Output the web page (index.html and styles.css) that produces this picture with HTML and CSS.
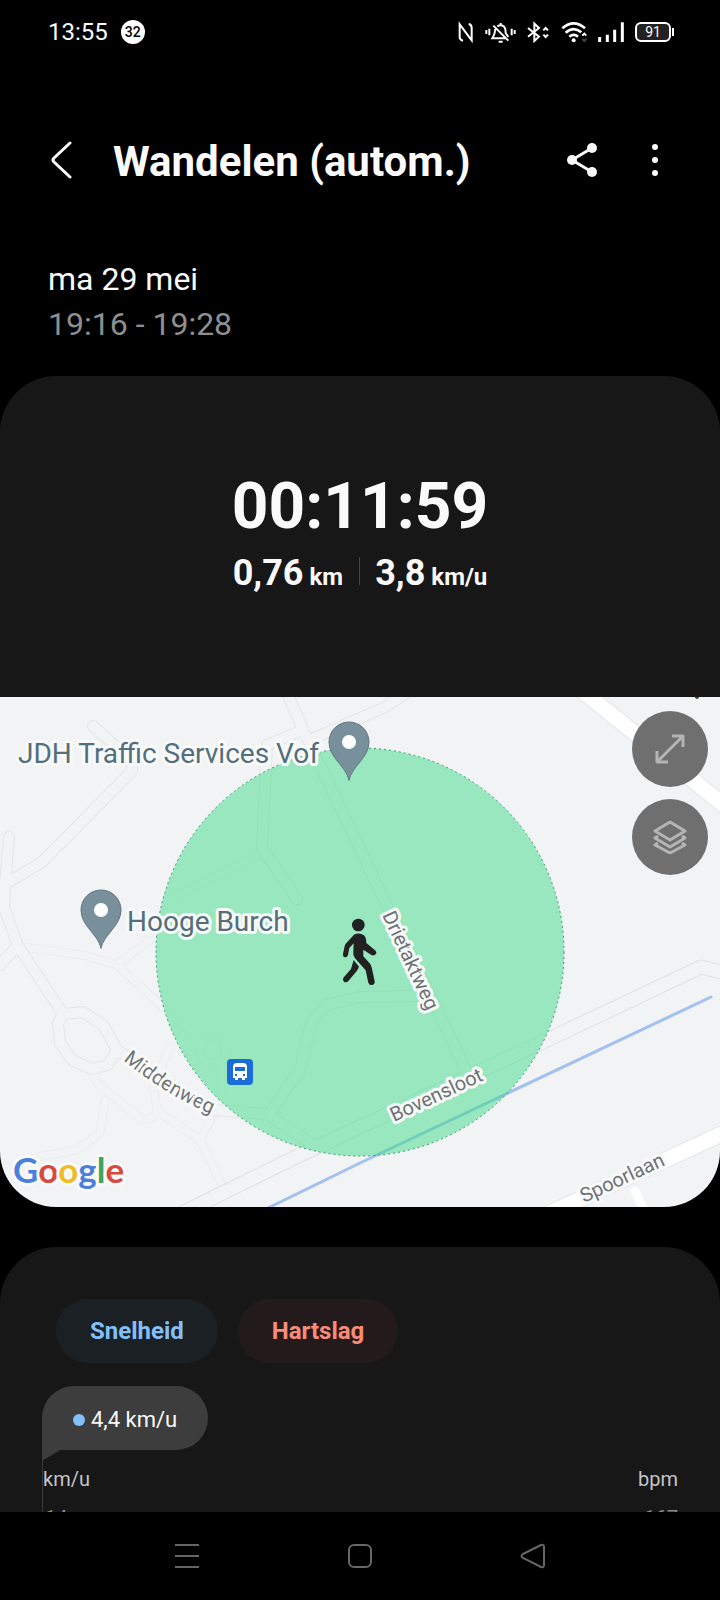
FILE: index.html
```html
<!DOCTYPE html>
<html lang="nl">

<head>
    <meta charset="UTF-8">
    <meta name="viewport" content="width=device-width,initial-scale=1.0">
    <title>Wandelen (autom.)</title>
    <link rel="stylesheet" href="styles.css">
</head>

<body>
    <div class="phone">
        <div class="status">
            <span class="clock">13:55</span>
            <span class="badge">32</span>
            <div class="status-icons">
                <svg width="16" height="22" viewBox="22 20 48 66">
                    <path d="M37 79Q27 77 27 68V30L63 78V40Q63 31 54 29" />
                </svg>
                <svg width="31" height="22" viewBox="100 20 93 66">
                    <path d="M104 47v12M113 43v20M180 43v20M189 47v12M147 26v6M131 44Q130 60 122 72H162M137 36Q147 29 156 36Q162 41 162 56L170 68M125 34L170 79M141 82H153" />
                </svg>
                <svg width="23" height="22" viewBox="228 20 69 66">
                    <path d="M231 41L264 67L250 80V28L264 41L231 67M277 48l7-7 7 7M277 61l7 7 7-7" />
                </svg>
                <svg width="26" height="22" viewBox="336 20 78 66">
                    <path class="thick" d="M340 42Q374 12 408 42M350 55Q374 34 397 54M361 67Q374 56 387 67" />
                    <circle cx="374" cy="78" r="6" />
                    <path d="M400 64l6-6 6 6" />
                    <path class="dim" d="M400 74l6 6 6-6" />
                </svg>
                <svg width="26" height="22" viewBox="446 20 78 66">
                    <path class="bar" d="M451 68v15M474 61v22M496 46v37M519 24v59" />
                </svg>
                <span class="battery">91</span>
            </div>
        </div>

        <header class="topbar">
            <button class="icon-btn" aria-label="Terug">
                <svg width="24" height="40" viewBox="0 0 24 40">
                    <path class="line" d="M20 3L4 18Q2 20 4 22L20 37" />
                </svg>
            </button>
            <h1>Wandelen (autom.)</h1>
            <button class="icon-btn" aria-label="Delen">
                <svg width="32" height="34" viewBox="0 0 32 34">
                    <path class="line" d="M26 5L6 17L26 29" />
                    <circle cx="26" cy="5" r="5" />
                    <circle cx="6" cy="17" r="5" />
                    <circle cx="26" cy="29" r="5" />
                </svg>
            </button>
            <button class="icon-btn" aria-label="Meer opties">
                <svg width="8" height="34" viewBox="0 0 8 34">
                    <circle cx="4" cy="4" r="3" />
                    <circle cx="4" cy="17" r="3" />
                    <circle cx="4" cy="30" r="3" />
                </svg>
            </button>
        </header>

        <main class="content">
            <div class="date">
                <p>ma 29 mei</p>
                <p class="time">19:16 - 19:28</p>
            </div>

            <section class="summary">
                <div class="duration">00:11:59</div>
                <div class="stats">
                    <div class="stat">0,76 <span>km</span></div>
                    <div class="stat">3,8 <span>km/u</span></div>
                </div>
            </section>

            <section class="map">
                <svg class="map-canvas" viewBox="0 0 720 510" preserveAspectRatio="xMidYMid slice">
                    <defs>
                        <g id="paths">
                            <path d="M22 250L83 258L117 268L165 312L192 336" />
                            <path d="M119 266L150 243" />
                            <circle cx="213" cy="353" r="13" />
                            <path d="M222 364V400" />
                            <path d="M92 373L97 386L143 424L158 417L153 390L170 350" />
                            <path d="M105 403L100 436L77 453L37 460" />
                            <path d="M160 416L200 443L223 490" />
                            <path d="M200 443L214 416" />
                            <path d="M260 157L175 200" />
                        </g>
                        <g id="streets">
                            <path d="M93 29L132 64V74L42 165L7 186" />
                            <path d="M9 140L5 186L4 210L18 249L63 317" />
                            <path d="M0 268L17 249" />
                            <path d="M63 317L83 315L103 328L117 353L108 368L92 372L72 363L60 346L58 326Z" />
                            <path d="M117 353L165 385L213 413L267 417L317 450" />
                            <path d="M270 416L300 373L312 323L327 308L360 300L415 299" />
                            <path d="M287 -4L305 37L360 152L466 373" />
                            <path d="M298 35L267 48L262 152L297 202" />
                            <path d="M310 43L360 21L385 10L405 -3" />
                        </g>
                        <path id="main-road" d="M184 515L300 458L547 343L701 270L725 276" />
                        <g id="big-roads">
                            <path d="M580 -8L726 110" />
                            <path d="M552 515L726 435" />
                        </g>
                        <path id="side-road" d="M635 494L644 514" />
                        <symbol id="pin" viewBox="-22 -22 44 62">
                            <path d="M0 38C-3 24 -20 16 -20 0A20 20 0 1 1 20 0C20 16 3 24 0 38Z" />
                            <circle r="7" />
                        </symbol>
                        <path id="middenweg" d="M123 363Q168 400 216 419" />
                    </defs>

                    <rect class="land" width="720" height="510" />
                    <use class="path-edge" href="#paths" />
                    <use class="path-fill" href="#paths" />
                    <use class="street-edge" href="#streets" />
                    <use class="main-edge" href="#main-road" />
                    <use class="street-fill" href="#streets" />
                    <use class="main-fill" href="#main-road" />
                    <use class="big-edge" href="#big-roads" />
                    <use class="big-fill" href="#big-roads" />
                    <use class="side-fill" href="#side-road" />
                    <path class="water" d="M264 513L360 466L711 300" />
                    <circle class="speck" cx="697" cy="0" r="2" />

                    <circle class="area" cx="360" cy="255" r="204" />

                    <text class="street" transform="translate(382 218) rotate(65)">Drietaktweg</text>
                    <text class="street" transform="translate(394 425) rotate(-25)">Bovensloot</text>
                    <text class="street" transform="translate(584 506) rotate(-25)">Spoorlaan</text>
                    <text class="street">
                        <textPath href="#middenweg">Middenweg</textPath>
                    </text>

                    <text class="place" x="18" y="66">JDH Traffic Services Vof</text>
                    <text class="place" x="127" y="234">Hooge Burch</text>
                    <use class="pin" href="#pin" x="327" y="23" width="44" height="62" />
                    <use class="pin" href="#pin" x="79" y="191" width="44" height="62" />

                    <!-- bushalte -->
                    <svg x="227" y="362" width="26" height="26" viewBox="0 0 26 26">
                        <rect class="bus-bg" width="26" height="26" rx="4" />
                        <path class="bus" fill-rule="evenodd" d="M6 8Q6 4 10 4H16Q20 4 20 8V19H18V21H15V19H11V21H8V19H6ZM8 8V12H18V8ZM8 15V17H10V15ZM16 15V17H18V15Z" />
                    </svg>

                    <!-- wandelaar -->
                    <svg x="320" y="203" width="130" height="130" viewBox="0 0 390 390">
                        <circle cx="115" cy="75" r="19" />
                        <path d="M102 104Q117 96 132 106Q139 113 139 129L165 151Q172 157 167 163Q161 169 153 164L130 149V169L149 190Q153 195 155 202L164 244Q165 255 155 255Q147 256 145 248L137 211L105 175Q98 167 100 155L101 130L88 144L84 165Q82 173 75 172Q68 171 69 162L74 138Q75 133 79 129Z" />
                        <path d="M101 180L117 200Q113 211 106 218L85 243Q79 250 72 245Q66 239 72 231L93 207Z" />
                    </svg>

                    <text class="google" x="13" y="486"><tspan class="g-blue">G</tspan><tspan class="g-red">o</tspan><tspan class="g-yellow">o</tspan><tspan class="g-blue">g</tspan><tspan class="g-green">l</tspan><tspan class="g-red">e</tspan></text>
                </svg>
                <div class="map-controls">
                    <button aria-label="Kaart vergroten">
                        <svg width="32" height="32" viewBox="0 0 32 32">
                            <path d="M3 29L29 3M18 3H29V14M3 18V29H14" />
                        </svg>
                    </button>
                    <button aria-label="Kaartlagen">
                        <svg width="34" height="34" viewBox="0 0 34 34">
                            <path d="M17 2L32 11L17 20L2 11ZM5 16L2 18L17 27L32 18L29 16M5 23L2 25L17 33L32 25L29 23" />
                        </svg>
                    </button>
                </div>
            </section>

            <section class="details">
                <div class="chips">
                    <button class="chip speed">Snelheid</button>
                    <button class="chip heart">Hartslag</button>
                </div>
                <div class="chart">
                    <div class="tooltip">4,4 km/u</div>
                    <div class="axis">
                        <div class="axis-row"><span>km/u</span><span>bpm</span></div>
                        <div class="axis-row values"><span>14</span><span>167</span></div>
                    </div>
                </div>
            </section>
        </main>

        <nav class="navbar">
            <button aria-label="Recente apps">
                <svg width="26" height="26" viewBox="0 0 26 26">
                    <path d="M1 2H25M1 13H25M1 24H25" />
                </svg>
            </button>
            <button aria-label="Startscherm">
                <svg width="26" height="26" viewBox="0 0 26 26">
                    <rect x="2" y="2" width="22" height="22" rx="5" />
                </svg>
            </button>
            <button aria-label="Vorige">
                <svg width="26" height="26" viewBox="0 0 26 26">
                    <path d="M3 11L21 2Q24 1 24 4V22Q24 25 21 24L3 15Q0 13 3 11Z" />
                </svg>
            </button>
        </nav>
    </div>
</body>

</html>
```
FILE: styles.css
```css
* {
    margin: 0;
    padding: 0;
    box-sizing: border-box;
}

body {
    background: #000;
    color: #fafafa;
    font-family: Roboto, "Liberation Sans", sans-serif;
}

button {
    border: none;
    background: none;
    color: inherit;
    font-family: inherit;
    cursor: pointer;
}

svg {
    display: block;
}

.phone {
    display: flex;
    flex-direction: column;
    height: 100vh;
}

/* status bar */
.status {
    display: flex;
    align-items: center;
    height: 64px;
    padding: 0 46px 0 48px;
}

.clock {
    font-size: 24px;
    line-height: 24px;
}

.badge {
    width: 24px;
    height: 24px;
    margin-left: 13px;
    border-radius: 50%;
    background: #fff;
    color: #000;
    font-size: 14px;
    font-weight: 500;
    line-height: 24px;
    text-align: center;
}

.status-icons {
    display: flex;
    align-items: center;
    gap: 11px;
    margin-left: auto;
}

.status-icons svg {
    fill: none;
    stroke: #fff;
    stroke-width: 6;
}

.status-icons circle {
    fill: #fff;
    stroke: none;
}

.status-icons .thick {
    stroke-width: 8;
}

.status-icons .dim {
    stroke: #444;
}

.status-icons .bar {
    stroke-width: 9;
}

.battery {
    position: relative;
    width: 36px;
    height: 20px;
    margin-right: 3px;
    border: 2px solid #fff;
    border-radius: 6px;
    background: #222;
    font-size: 14px;
    line-height: 16px;
    text-align: center;
}

.battery::after {
    content: "";
    position: absolute;
    top: 4px;
    right: -5px;
    width: 2px;
    height: 8px;
    background: #fff;
}

/* header */
.topbar {
    display: flex;
    align-items: center;
    gap: 25px;
    height: 192px;
    padding: 0 41px 0 38px;
}

.topbar h1 {
    flex: 1;
    padding: 3px 0 0 2px;
    font-size: 42px;
    font-weight: 700;
    white-space: nowrap;
}

.icon-btn {
    display: flex;
    align-items: center;
    justify-content: center;
    width: 48px;
    height: 48px;
}

.icon-btn svg {
    fill: #fafafa;
}

.icon-btn .line {
    fill: none;
    stroke: #fafafa;
    stroke-width: 3;
    stroke-linecap: round;
}

.content {
    flex: 1;
    min-height: 0;
    overflow-y: auto;
    scrollbar-width: none;
}

.date {
    padding: 1px 48px 29px;
    font-size: 32px;
    line-height: 45px;
}

.date .time {
    color: #8f8f8f;
}

.summary {
    padding: 93px 20px 102px;
    border-radius: 56px 56px 0 0;
    background: #171717;
    font-weight: 700;
    text-align: center;
}

.duration {
    font-size: 64px;
    line-height: 76px;
}

.stats {
    display: flex;
    align-items: center;
    justify-content: center;
    margin-top: 6px;
    font-size: 36px;
    line-height: 44px;
}

.stat {
    display: flex;
    align-items: baseline;
    gap: 6px;
    position: relative;
    padding: 0 16px;
}

.stat span {
    font-size: 24px;
    line-height: 24px;
}

.stat + .stat::before {
    content: "";
    position: absolute;
    left: 0;
    top: 6px;
    width: 1px;
    height: 28px;
    background: #444;
}

/* map */
.map {
    position: relative;
    border-radius: 0 0 56px 56px;
    overflow: hidden;
}

.map-canvas {
    width: 100%;
    height: 510px;
}

.land {
    fill: #f1f3f5;
}

.map-canvas use,
.water {
    fill: none;
    stroke-linecap: round;
    stroke-linejoin: round;
}

.path-edge {
    stroke: #eaedef;
    stroke-width: 9;
}

.path-fill {
    stroke: #f1f3f5;
    stroke-width: 7;
}

.street-edge {
    stroke: #e3e6e8;
    stroke-width: 12;
}

.street-fill {
    stroke: #f1f3f5;
    stroke-width: 10;
}

.main-edge {
    stroke: #dfe2e4;
    stroke-width: 15;
}

.main-fill {
    stroke: #f1f3f5;
    stroke-width: 13;
}

.big-edge {
    stroke: #e3e6e8;
    stroke-width: 17;
}

.big-fill {
    stroke: #fff;
    stroke-width: 15;
}

.side-fill {
    stroke: #fff;
    stroke-width: 9;
}

.water {
    stroke: #a3c0ee;
    stroke-width: 3;
}

.speck {
    fill: #444;
}

.area {
    fill: rgba(63, 219, 137, 0.5);
    stroke: #2f9a72;
    stroke-width: 1;
    stroke-dasharray: 2 3;
}

.map-canvas text {
    stroke: #f8fafa;
    stroke-width: 6;
    stroke-linejoin: round;
    paint-order: stroke;
}

.street {
    fill: #6f7275;
    font-size: 20px;
}

.place {
    fill: #546e7a;
    font-size: 28px;
}

.map-canvas .pin {
    fill: #78909c;
    stroke: #5f7682;
    stroke-width: 1;
}

#pin circle {
    fill: #fff;
    stroke: none;
}

.bus-bg {
    fill: #1a6dd6;
}

.bus {
    fill: #fff;
}

.map-canvas svg {
    fill: #212121;
}

.google {
    font-family: Lato, sans-serif;
    font-size: 35px;
    font-weight: 700;
}

.g-blue {
    fill: #4a80dc;
}

.g-red {
    fill: #d64a3f;
}

.g-yellow {
    fill: #f0bb24;
}

.g-green {
    fill: #43a35a;
}

.map-controls {
    position: absolute;
    top: 14px;
    right: 12px;
    display: flex;
    flex-direction: column;
    gap: 12px;
}

.map-controls button {
    display: flex;
    align-items: center;
    justify-content: center;
    width: 76px;
    height: 76px;
    border-radius: 50%;
    background: #6f6f6f;
}

.map-controls svg {
    fill: none;
    stroke: #b4b4b4;
    stroke-width: 3;
    stroke-linejoin: round;
}

/* speed and heart rate */
.details {
    margin-top: 40px;
    padding: 52px 42px 40px;
    border-radius: 56px 56px 0 0;
    background: #171717;
}

.chips {
    display: flex;
    gap: 20px;
    padding: 0 14px;
}

.chip {
    height: 64px;
    padding: 0 34px;
    border-radius: 32px;
    font-size: 24px;
    font-weight: 700;
}

.speed {
    background: #1b2024;
    color: #83bff8;
}

.heart {
    background: #231b1b;
    color: #fa8b78;
}

.chart {
    margin-top: 23px;
}

.tooltip {
    position: relative;
    display: flex;
    align-items: center;
    gap: 6px;
    width: max-content;
    height: 64px;
    padding: 3px 31px 0;
    border-radius: 32px 32px 32px 0;
    background: #3d3d3d;
    font-size: 22px;
}

.tooltip::before {
    content: "";
    width: 12px;
    height: 12px;
    border-radius: 50%;
    background: #83bff8;
}

.tooltip::after {
    content: "";
    position: absolute;
    left: 0;
    top: 100%;
    width: 18px;
    height: 11px;
    background: #3d3d3d;
    clip-path: polygon(0 0, 100% 0, 0 100%);
}

.axis {
    display: flex;
    flex-direction: column;
    gap: 15px;
    padding-top: 17px;
    border-left: 1px solid #3a3a3a;
    color: #c4c4c4;
    font-size: 20px;
    line-height: 24px;
}

.axis-row {
    display: flex;
    justify-content: space-between;
}

.values {
    padding-left: 2px;
    color: #8a8a8a;
}

/* system navigation */
.navbar {
    display: flex;
    height: 88px;
    padding: 0 14%;
    background: #000;
}

.navbar button {
    flex: 1;
    display: flex;
    align-items: center;
    justify-content: center;
}

.navbar svg {
    fill: none;
    stroke: #666;
    stroke-width: 2;
}
```
